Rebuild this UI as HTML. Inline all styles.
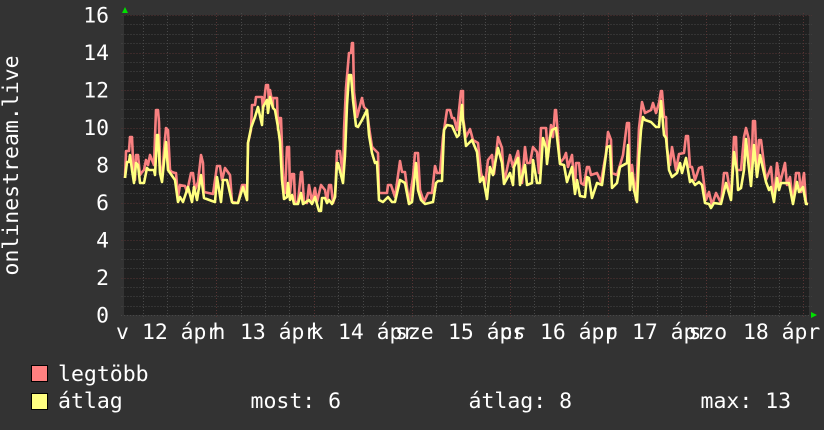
<!DOCTYPE html>
<html><head><meta charset="utf-8"><style>
html,body{margin:0;padding:0;background:#333;width:824px;height:430px;overflow:hidden}
svg{display:block}
text{font-family:"DejaVu Sans Mono","Liberation Mono",monospace;fill:#fff}
.y{font-size:21.4px;text-anchor:end}
.x{font-size:21.4px}
.l{font-size:21.5px}
</style></head><body>
<svg width="824" height="430" viewBox="0 0 824 430" xmlns="http://www.w3.org/2000/svg">
<rect width="824" height="430" fill="#333"/>
<rect x="124" y="15" width="685" height="300" fill="#202020"/>
<g id="g" shape-rendering="crispEdges" fill="none">
<path stroke="#484848" stroke-width="1" stroke-dasharray="1 2" d="M121.500 24.500H812M121.500 34.500H812M121.500 43.500H812M121.500 62.500H812M121.500 71.500H812M121.500 81.500H812M121.500 99.500H812M121.500 109.500H812M121.500 118.500H812M121.500 137.500H812M121.500 146.500H812M121.500 156.500H812M121.500 174.500H812M121.500 184.500H812M121.500 193.500H812M121.500 212.500H812M121.500 221.500H812M121.500 231.500H812M121.500 249.500H812M121.500 259.500H812M121.500 268.500H812M121.500 287.500H812M121.500 296.500H812M121.500 306.500H812"/>
<path stroke="#484848" stroke-width="1" stroke-dasharray="1 2" d="M143.500 13V318M167.500 13V318M192.500 13V318M241.500 13V318M265.500 13V318M289.500 13V318M338.500 13V318M363.500 13V318M387.500 13V318M436.500 13V318M461.500 13V318M485.500 13V318M534.500 13V318M559.500 13V318M583.500 13V318M632.500 13V318M657.500 13V318M681.500 13V318M730.500 13V318M754.500 13V318M779.500 13V318"/>
<path stroke="#583434" stroke-width="1" stroke-dasharray="1 2" d="M121.500 15.500H812M121.500 53.500H812M121.500 90.500H812M121.500 128.500H812M121.500 165.500H812M121.500 203.500H812M121.500 240.500H812M121.500 278.500H812"/>
<path stroke="#583434" stroke-width="1" stroke-dasharray="1 2" d="M216.500 13V318M314.500 13V318M412.500 13V318M510.500 13V318M608.500 13V318M706.500 13V318M803.500 13V318"/>
<path stroke="#484848" stroke-width="1" stroke-dasharray="1 2" d="M121 315.500H812"/>
</g>
<polygon points="122,13 128,13 125,7" fill="#00e000"/>
<polygon points="811,312 811,318 817,315" fill="#00e000"/>
<polyline fill="none" stroke="#f88080" stroke-width="2.600" stroke-linejoin="round" points="125,178 126,151 129,151 130,137 132,137 133,160 135,180 136,155 138,155 140,175 142,172 144,170 146,160 148,165 150,155 152,160 154,165 156,110 158,110 159,122 160,165 162,180 164,150 166,128 168,130 170,170 172,172 175,173 176,173 178,197 180,185 185,186 187,192 191,173 193,173 195,190 198,182 201,155 203,163 204,192 213,194 217,166 220,166 222,180 225,168 230,175 232,202 238,203 242,185 245,185 247,200 248,143 251,130 252,105 255,105 256,97 262,97 263,110 266,85 268,85 269,103 270,90 273,107 273,98 277,98 278,130 279,118 281,118 283,177 285,193 287,147 289,147 290,193 292,174 294,174 295,202 298,202 301,172 302,172 304,202 307,203 309,185 312,202 315,188 317,202 321,185 325,190 327,202 329,185 331,185 333,203 335,197 337,151 340,151 343,177 344,130 346,88 349,53 351,53 352,43 353,43 354,92 357,117 362,98 364,107 367,110 369,127 372,147 378,153 379,193 387,193 388,185 391,185 395,197 400,161 402,172 405,172 409,203 413,177 415,153 418,153 420,190 424,202 428,193 432,193 435,166 437,173 440,173 443,137 447,110 450,110 452,118 454,118 457,130 461,91 463,91 463,118 466,137 470,129 473,140 478,143 481,173 485,185 488,160 492,155 494,174 498,137 502,148 504,183 510,155 513,167 518,151 522,183 525,147 527,163 530,163 533,147 537,152 539,173 541,128 546,128 548,157 551,125 553,137 555,110 556,110 560,163 564,158 566,153 568,167 572,155 575,193 576,163 579,163 581,183 584,185 587,167 589,167 591,175 597,173 601,182 606,153 608,132 611,140 612,173 617,175 620,165 623,155 627,123 629,123 630,190 632,165 636,200 639,128 642,102 645,113 651,110 653,103 656,113 659,103 661,91 662,91 664,117 666,117 667,148 670,165 672,147 676,170 679,154 684,153 686,136 688,136 690,167 692,167 695,180 699,168 702,167 706,200 709,192 712,205 716,193 721,203 724,173 727,173 731,198 734,137 736,137 737,170 741,170 744,137 746,128 749,140 751,185 753,121 755,121 757,173 759,140 761,140 766,180 771,167 774,200 777,163 780,183 785,163 787,185 790,177 793,203 796,173 799,173 801,192 804,173 806,203 808,204"/>
<polyline fill="none" stroke="#ffff80" stroke-width="2.600" stroke-linejoin="round" points="125,178 127,162 129,162 130,155 132,170 134,183 136,163 138,165 140,183 144,183 147,168 149,170 154,170 155,175 157,135 158,135 160,173 162,182 166,142 168,170 175,180 178,202 180,197 183,202 188,187 192,202 194,187 197,200 201,175 204,198 212,201 215,202 217,177 221,202 223,180 227,180 232,202 233,203 238,203 243,187 247,200 248,143 251,128 255,117 258,107 262,125 263,107 267,100 268,113 270,97 273,108 275,110 278,127 280,142 282,180 284,199 287,197 288,183 290,200 292,195 294,204 298,204 301,193 303,204 309,200 312,204 315,197 319,211 321,211 322,198 325,198 327,203 329,200 332,204 335,197 337,163 338,163 343,183 345,155 347,105 349,75 351,75 353,100 356,126 358,127 362,120 367,110 369,135 372,153 375,163 377,162 379,200 383,202 388,197 392,202 395,202 400,180 405,183 409,204 412,202 416,163 418,190 421,200 425,204 433,202 436,183 438,181 442,181 444,130 447,125 452,126 457,137 459,135 462,105 463,120 466,146 472,140 477,152 480,182 483,177 487,199 490,167 493,175 498,148 502,163 504,184 510,173 513,185 514,167 518,158 520,185 525,165 527,185 532,183 533,160 537,183 540,183 543,138 546,148 547,164 550,138 552,130 556,128 560,164 564,165 567,182 572,167 575,194 577,180 580,196 585,197 587,177 589,178 592,198 597,183 602,185 607,147 610,146 612,188 617,183 620,167 627,163 628,145 630,190 632,173 634,190 637,202 639,157 641,130 643,117 645,120 651,122 656,127 659,127 661,101 664,135 666,138 669,170 672,177 677,173 680,163 682,173 686,158 690,182 692,180 695,185 699,182 702,185 705,203 709,204 711,208 714,203 721,204 726,183 731,200 734,152 737,172 738,190 741,188 744,170 746,139 748,160 751,186 754,145 757,177 760,155 766,182 769,190 771,187 774,202 777,178 779,190 781,183 789,183 793,204 797,182 799,192 803,187 806,204 808,204"/>
<g>
<text class="y" x="109" y="22.500">16</text>
<text class="y" x="109" y="60">14</text>
<text class="y" x="109" y="97.500">12</text>
<text class="y" x="109" y="135">10</text>
<text class="y" x="109" y="172.500">8</text>
<text class="y" x="109" y="210">6</text>
<text class="y" x="109" y="247.500">4</text>
<text class="y" x="109" y="285">2</text>
<text class="y" x="109" y="322.500">0</text>
</g>
<g>
<text class="x" x="116" y="339">v</text>
<text class="x" x="142" y="339">12 ápr</text>
<text class="x" x="212.500" y="339">h</text>
<text class="x" x="240" y="339">13 ápr</text>
<text class="x" x="310.500" y="339">k</text>
<text class="x" x="338" y="339">14 ápr</text>
<text class="x" x="395" y="339">sze</text>
<text class="x" x="448" y="339">15 ápr</text>
<text class="x" x="499.500" y="339">cs</text>
<text class="x" x="540" y="339">16 ápr</text>
<text class="x" x="605" y="339">p</text>
<text class="x" x="632" y="339">17 ápr</text>
<text class="x" x="688.500" y="339">szo</text>
<text class="x" x="743" y="339">18 ápr</text>
</g>
<rect x="31.500" y="365.500" width="16" height="16" fill="#ff8080" stroke="#000"/>
<rect x="31.500" y="393.500" width="16" height="16" fill="#ffff80" stroke="#000"/>
<text class="l" x="58" y="381">legtöbb</text>
<text class="l" x="58" y="408">átlag</text>
<text class="l" x="250.500" y="408">most: 6</text>
<text class="l" x="468.500" y="408">átlag: 8</text>
<text class="l" x="700.500" y="408">max: 13</text>
<text class="l" transform="translate(18,275.500) rotate(-90)" x="0" y="0">onlinestream.live</text>
</svg>
</body></html>
